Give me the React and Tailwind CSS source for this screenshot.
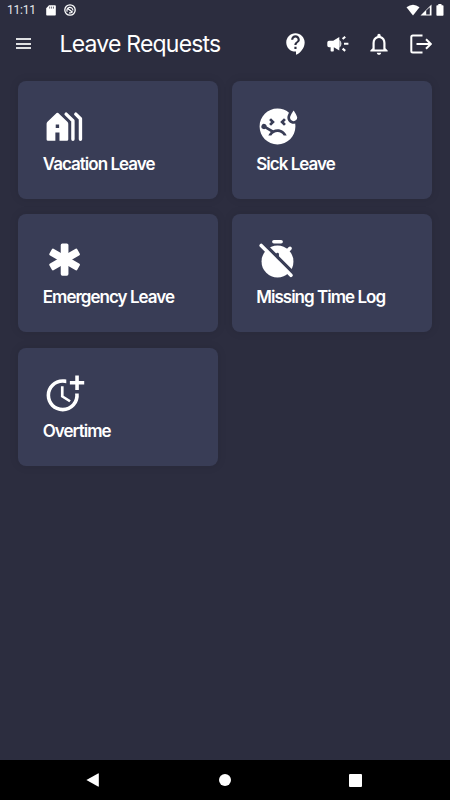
import React from "react";
import {
    MdContactSupport,
    MdMoreTime,
    MdOutlineNotifications,
    MdSick
} from "react-icons/md";

const HolidayIcon = () => (
    <svg viewBox="0 0 24 24" className="size-[43px]" fill="currentColor">
        <path
            fillRule="evenodd"
            d="M7.6 4.5 2.5 9.3Q2 9.8 2 10.4v8.8q0 .8.8.8h4.1v-4.6h2.3V20h4.1q.8 0 .8-.8v-8.8q0-.6-.5-1.1L8.5 4.5q-.4-.4-.9 0ZM7.1 10.9h1.9v1.9H7.1Z"
        />
        <path
            d="M12.9 5.1 16.7 8.8V19.1M18.3 5.1 20.9 7.7V19.1"
            fill="none"
            stroke="currentColor"
            strokeWidth="1.9"
            strokeLinecap="round"
            strokeLinejoin="round"
        />
    </svg>
);

const EmergencyIcon = () => (
    <svg viewBox="0 0 24 24" className="size-[43px]" fill="currentColor">
        <rect x="9.9" y="3" width="4.3" height="18" rx=".9" />
        <rect x="9.9" y="3" width="4.3" height="18" rx=".9" transform="rotate(60 12.05 12)" />
        <rect x="9.9" y="3" width="4.3" height="18" rx=".9" transform="rotate(-60 12.05 12)" />
    </svg>
);

const TimerOffIcon = () => (
    <svg viewBox="0 0 24 24" className="size-[43px]" fill="none" stroke="currentColor" strokeLinecap="round">
        <mask id="timer-cut">
            <rect width="24" height="24" fill="white" stroke="none" />
            <path d="M4.4 3.2 22 20.8" stroke="black" strokeWidth="2" />
            <path d="M12 9v4" stroke="black" strokeWidth="1.6" />
        </mask>
        <g mask="url(#timer-cut)">
            <circle cx="12" cy="13.1" r="8.9" fill="currentColor" stroke="none" />
            <path d="m17.5 7.3 1.5-1.5" strokeWidth="2" />
        </g>
        <path d="M10 2.1h4" strokeWidth="2" />
        <path d="M2.9 4.2 19.5 20.8" strokeWidth="2" />
    </svg>
);

const CampaignIcon = () => (
    <svg viewBox="0 0 22 18" className="ml-[18px] h-[18px] w-[22px]" fill="currentColor">
        <path d="M2 5.7h4.2L12.3 2v13.4L6.8 12.2v3.6q0 .7-.7.7H4.3q-.7 0-.7-.7v-3.6H2q-1.7 0-1.7-1.7V7.4q0-1.7 1.7-1.7Z" />
        <path d="M12.3 4.8q2.2 1.5 2.2 4t-2.2 4Z" opacity=".8" />
        <path d="m15.6 4 2.6-2.3M17 8.8h4.4M15.6 13.6l2.6 2.3" fill="none" stroke="currentColor" strokeWidth="2.1" />
    </svg>
);

const LogoutIcon = () => (
    <svg viewBox="0 0 22 20" className="ml-[18px] h-5 w-[22px]" fill="none" stroke="currentColor" strokeWidth="2">
        <path d="M12.5 1.5H2.8Q1.3 1.5 1.3 3v14q0 1.5 1.5 1.5h9.7" />
        <path d="M6.5 10h14M16 5.2l4.8 4.8-4.8 4.8" />
    </svg>
);

const leaves = [
    { label: "Vacation Leave", icon: <HolidayIcon /> },
    { label: "Sick Leave", icon: <MdSick className="size-[43px]" /> },
    { label: "Emergency Leave", icon: <EmergencyIcon /> },
    { label: "Missing Time Log", icon: <TimerOffIcon /> },
    { label: "Overtime", icon: <MdMoreTime className="size-[43px]" /> }
];

const StatusBar = () => (
    <div className="flex h-5 items-center pl-[7px] pr-[6px]">
        <span className="w-[39px] font-[Roboto] text-[12px] leading-[22px] tracking-[-0.2px] text-gray-200">11:11</span>
        {/* SD card */}
        <svg viewBox="0 0 10 11" className="h-[11px] w-[10px]">
            <path d="M3 .3h6q.8 0 .8.8v8.7q0 .8-.8.8H1q-.8 0-.8-.8V3.2Z" fill="white" />
            <path d="M3.7 1.6v2M5.6 1.6v2M7.5 1.6v2" stroke="#2c2d3f" strokeWidth=".7" />
        </svg>
        <svg viewBox="0 0 12 12" className="ml-2 size-3" fill="none" stroke="white">
            <circle cx="6" cy="6" r="5.2" strokeWidth="1.3" />
            <path d="M3.2 7.7A3 3 0 1 1 8.9 6.5M3.3 4.3l5.4 4M5 8.8q1.8.5 3-.5" strokeWidth="1.2" />
        </svg>
        {/* Wifi, signal, battery */}
        <svg viewBox="0 0 14 12" className="ml-auto h-3 w-[14px]">
            <path d="M.5 3.3Q7-2 13.5 3.3L7 11.6Z" fill="white" />
        </svg>
        <svg viewBox="0 0 12 12" className="h-3 w-3">
            <path d="M11.5.5v11H.5Z" fill="white" />
            <path d="M6.2 6.6v3.8h3.6V3.2Z" fill="#2c2d3f" />
        </svg>
        <svg viewBox="0 0 8 12" className="ml-[4px] h-3 w-2" fill="white">
            <path d="M2.3 0h3.2v1.3h1.3q.7 0 .7.7v9q0 .8-.7.8H1.1Q.4 11.8.4 11V2q0-.7.7-.7h1.2Z" />
        </svg>
    </div>
);

const Header = () => (
    <header className="flex h-12 items-center pl-4 pr-[18px]">
        <div className="-mt-px flex w-[15px] flex-col gap-[2.5px]">
            <span className="h-[2px] bg-white/85" />
            <span className="h-[2px] bg-white/85" />
            <span className="h-[2px] bg-white/85" />
        </div>
        <h1 className="ml-[28.5px] whitespace-nowrap text-[23px] leading-8 tracking-[-0.8px]">Leave Requests</h1>
        <div className="-mt-px ml-auto flex items-center">
            <MdContactSupport className="size-[26px]" />
            <CampaignIcon />
            <MdOutlineNotifications className="ml-[17px] size-[26px]" />
            <LogoutIcon />
        </div>
    </header>
);

const LeaveCard = ({ label, icon }) => (
    <div className="flex h-[118px] flex-col rounded-lg bg-[#393d56] pl-[24.5px] pt-[24px] shadow-[0_0_10px_rgba(0,0,0,0.1)]">
        {icon}
        <span className="mt-1 whitespace-nowrap text-[17px] font-semibold leading-6 tracking-[-0.98px]">{label}</span>
    </div>
);

const App = () => (
    <div className="flex h-[800px] w-[450px] flex-col overflow-hidden bg-[#2c2d3f] font-['Inter',sans-serif] text-white">
        <StatusBar />
        <Header />
        <main className="grid flex-1 grid-cols-[200px_200px] content-start gap-x-[13.5px] gap-y-[15.3px] pl-[18.25px] pt-[13px]">
            {leaves.map((leave) => (
                <LeaveCard key={leave.label} {...leave} />
            ))}
        </main>
        <nav className="flex h-10 items-center justify-between bg-black pl-[86px] pr-[88px]">
            <svg viewBox="0 0 13 14" className="h-[14px] w-[13px]" fill="white">
                <path d="M.4 7 12 .4q.8-.4.8.5v12.2q0 .9-.8.5Z" />
            </svg>
            <span className="ml-px size-3 rounded-full bg-white" />
            <span className="size-[13px] rounded-[1px] bg-white" />
        </nav>
    </div>
);

export default App;
